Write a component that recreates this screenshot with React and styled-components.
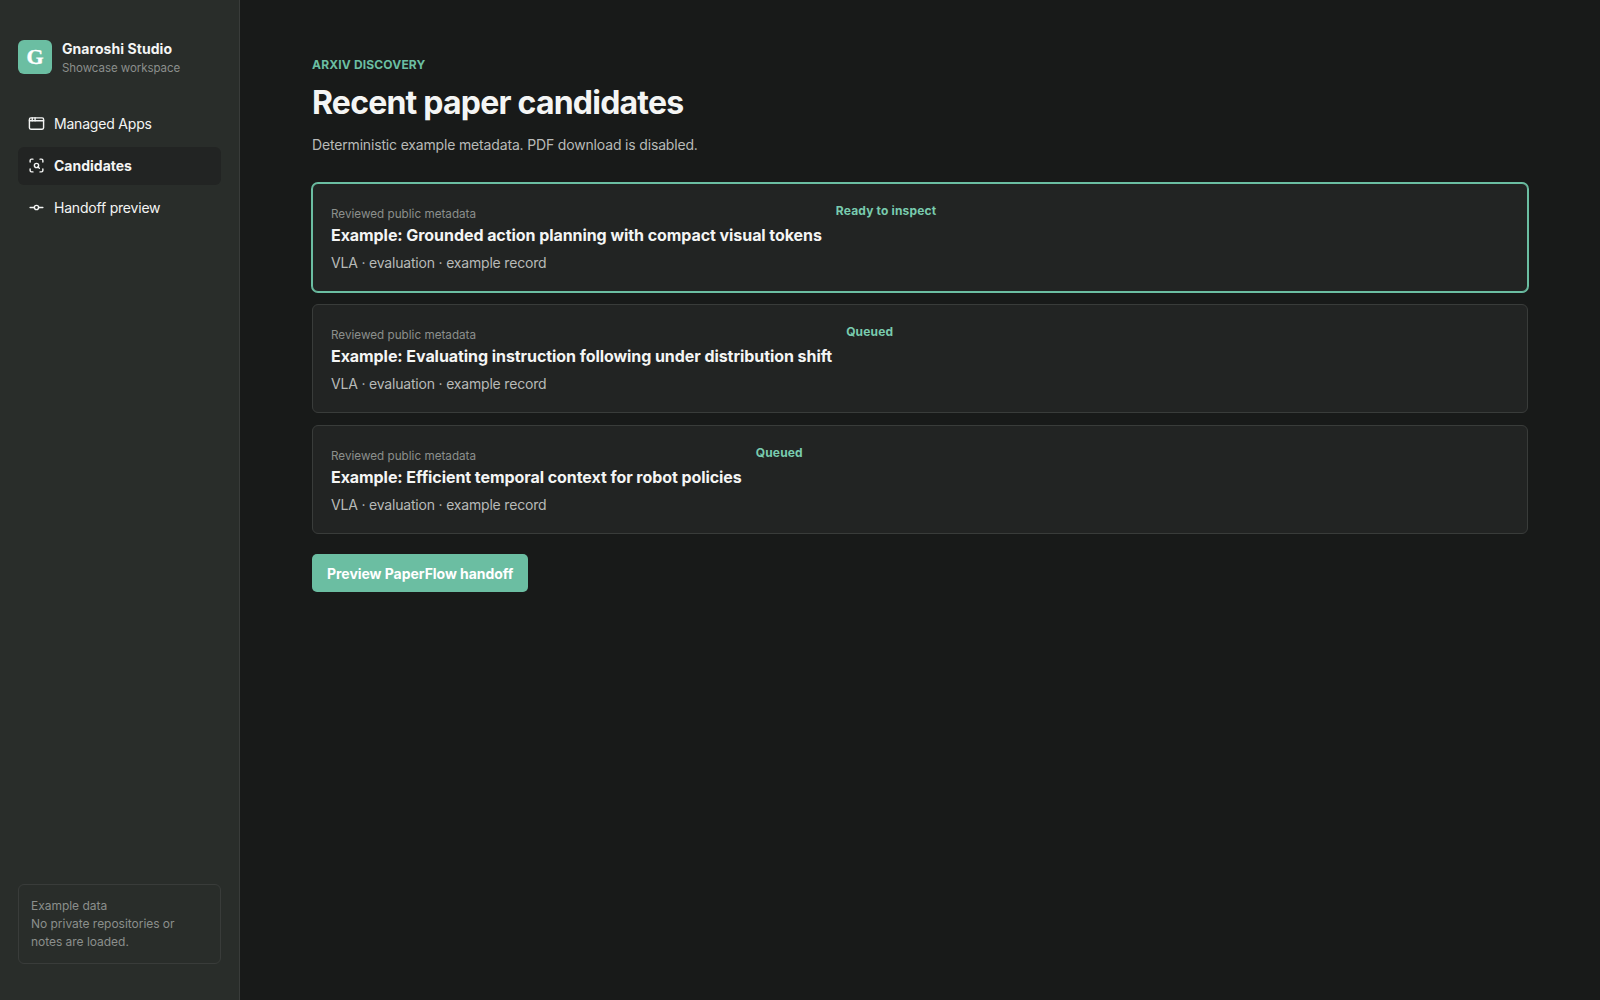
import React from "react";
import styled, { createGlobalStyle } from "styled-components";
import { AppWindow, ScanSearch, GitCommitHorizontal } from "lucide-react";

const color = {
  page: "#181a19",
  sidebar: "#292d2a",
  surface: "#222423",
  line: "#393c3a",
  accent: "#6bbea2",
  accentText: "#79cbae",
  text: "#f4f5f4",
  soft: "#b8bab8",
  muted: "#8b8f8c",
};

const GlobalStyle = createGlobalStyle`
  * {
    box-sizing: border-box;
  }
  body {
    margin: 0;
    background: ${color.page};
    color: ${color.text};
    font-family: Inter, "Liberation Sans", sans-serif;
    font-size: 14px;
    -webkit-font-smoothing: antialiased;
  }
  h1, h2, p {
    margin: 0;
  }
`;

const Layout = styled.div`
  display: grid;
  grid-template-columns: 240px 1fr;
  height: 100vh;
`;

const Sidebar = styled.aside`
  display: flex;
  flex-direction: column;
  padding: 40px 18px 36px;
  background: ${color.sidebar};
  border-right: 1px solid ${color.line};
`;

const Brand = styled.div`
  display: flex;
  align-items: center;
  gap: 10px;
  height: 34px;
  margin-bottom: 31px;
`;

const BrandMark = styled.div`
  display: grid;
  place-items: center;
  width: 34px;
  height: 34px;
  border-radius: 6px;
  background: ${color.accent};
  color: #fff;
  font: bold 22px/1 "Liberation Serif", serif;
  -webkit-text-stroke: 0.4px #fff;
`;

const BrandText = styled.div`
  display: flex;
  flex-direction: column;
  padding-top: 4px;

  .name {
    font-size: 14px;
    line-height: 18px;
    font-weight: 650;
    letter-spacing: 0.06px;
  }
  .workspace {
    font-size: 11.5px;
    line-height: 20px;
    letter-spacing: -0.05px;
    color: ${color.muted};
  }
`;

const Nav = styled.nav`
  display: flex;
  flex-direction: column;
  gap: 4px;
`;

const NavItem = styled.a`
  display: flex;
  align-items: center;
  gap: 9px;
  height: 38px;
  padding: 0 10px 2px;
  border-radius: 6px;
  font-size: 14px;
  font-weight: ${({ $active }) => ($active ? 650 : 400)};
  letter-spacing: ${({ $active }) => ($active ? "0" : "-0.2px")};
  background: ${({ $active }) => ($active ? color.surface : "transparent")};
`;

const Note = styled.div`
  margin-top: auto;
  padding: 12px;
  border: 1px solid ${color.line};
  border-radius: 6px;
  font-size: 12px;
  line-height: 18px;
  letter-spacing: -0.03px;
  color: ${color.muted};
`;

const Main = styled.main`
  padding: 56px 72px;
`;

const Eyebrow = styled.p`
  font-size: 12px;
  line-height: 18px;
  font-weight: 650;
  letter-spacing: 0.17px;
  color: ${color.accent};
`;

const Title = styled.h1`
  margin-top: 9px;
  font-size: 32px;
  line-height: 40px;
  font-weight: 700;
  letter-spacing: -0.78px;
`;

const Lead = styled.p`
  margin-top: 11px;
  font-size: 14px;
  line-height: 22px;
  letter-spacing: -0.165px;
  color: ${color.soft};
`;

const CardList = styled.div`
  display: flex;
  flex-direction: column;
  gap: 12px;
  margin-top: 27px;
`;

const Card = styled.article`
  display: flex;
  align-items: flex-start;
  gap: 14px;
  height: 109px;
  padding: 18px;
  border: 1px solid ${({ $selected }) => ($selected ? color.accent : color.line)};
  border-radius: 6px;
  background: ${color.surface};
  box-shadow: ${({ $selected }) => ($selected ? `0 0 0 1px ${color.accent}` : "none")};
`;

const CardBody = styled.div`
  padding-top: 3px;

  .source {
    font-size: 11.7px;
    line-height: 18px;
    color: ${color.muted};
  }
  h2 {
    font-size: 16px;
    line-height: 24px;
    font-weight: 650;
    letter-spacing: -0.065px;
  }
  .tags {
    margin-top: 5px;
    font-size: 14px;
    line-height: 22px;
    letter-spacing: -0.19px;
    color: ${color.soft};
  }
`;

const Status = styled.span`
  font-size: 12px;
  line-height: 18px;
  font-weight: 650;
  letter-spacing: 0.16px;
  color: ${color.accentText};
`;

const PrimaryButton = styled.button`
  height: 38px;
  margin-top: 20px;
  padding: 0 15px;
  border: 0;
  border-radius: 5px;
  background: ${color.accent};
  color: #fff;
  font-family: inherit;
  font-size: 14px;
  font-weight: 650;
  letter-spacing: -0.04px;
`;

const navItems = [
  { label: "Managed Apps", icon: AppWindow },
  { label: "Candidates", icon: ScanSearch, active: true },
  { label: "Handoff preview", icon: GitCommitHorizontal },
];

const papers = [
  {
    title: "Example: Grounded action planning with compact visual tokens",
    status: "Ready to inspect",
    selected: true,
  },
  {
    title: "Example: Evaluating instruction following under distribution shift",
    status: "Queued",
  },
  {
    title: "Example: Efficient temporal context for robot policies",
    status: "Queued",
  },
];

const App = () => {
  return (
    <>
      <GlobalStyle />
      <Layout>
        <Sidebar>
          <Brand>
            <BrandMark>G</BrandMark>
            <BrandText>
              <span className="name">Gnaroshi Studio</span>
              <span className="workspace">Showcase workspace</span>
            </BrandText>
          </Brand>
          <Nav>
            {navItems.map(({ label, icon: Icon, active }) => (
              <NavItem key={label} $active={active}>
                <Icon size={17} />
                <span>{label}</span>
              </NavItem>
            ))}
          </Nav>
          <Note>
            <p>Example data</p>
            <p>No private repositories or notes are loaded.</p>
          </Note>
        </Sidebar>
        <Main>
          <Eyebrow>ARXIV DISCOVERY</Eyebrow>
          <Title>Recent paper candidates</Title>
          <Lead>Deterministic example metadata. PDF download is disabled.</Lead>
          <CardList>
            {papers.map((paper) => (
              <Card key={paper.title} $selected={paper.selected}>
                <CardBody>
                  <p className="source">Reviewed public metadata</p>
                  <h2>{paper.title}</h2>
                  <p className="tags">VLA · evaluation · example record</p>
                </CardBody>
                <Status>{paper.status}</Status>
              </Card>
            ))}
          </CardList>
          <PrimaryButton>Preview PaperFlow handoff</PrimaryButton>
        </Main>
      </Layout>
    </>
  );
};

export default App;
